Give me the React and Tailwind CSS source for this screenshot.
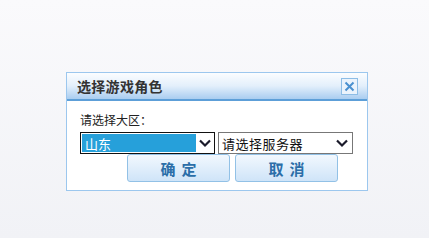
import React from "react";

const Chevron = () => (
  <svg width="14" height="10" viewBox="0 0 14 10" className="shrink-0">
    <path d="M2 2.5 L7 7.5 L12 2.5" fill="none" stroke="#1a1a2a" strokeWidth="2.2" />
  </svg>
);

export default function App() {
  const font = { fontFamily: '"Noto Sans CJK SC", "Noto Sans", sans-serif' };
  return (
    <div
      className="w-[429px] h-[238px] bg-gradient-to-b from-[#fafafc] to-[#f1f2f6] pt-[72px] pl-[66px]"
      style={font}
    >
      <div className="w-[302px] h-[119px] border border-[#9cc7ee] bg-white flex flex-col">
        <div className="h-[28px] bg-gradient-to-b from-[#fbfdff] via-[#e3effb] to-[#a9cdf0] border-b-2 border-[#5d9fd8] flex items-center justify-between pl-[10px] pr-[9px]">
          <span className="text-[14px] font-bold text-[#333] leading-none tracking-[0.3px]">选择游戏角色</span>
          <div className="w-[17px] h-[17px] border border-[#8dbde6] bg-[#eaf3fc] flex items-center justify-center">
            <svg width="11" height="11" viewBox="0 0 11 11">
              <path d="M1.5 1.5 L9.5 9.5 M9.5 1.5 L1.5 9.5" stroke="#4a90d0" strokeWidth="2" />
            </svg>
          </div>
        </div>
        <div className="pl-[13px] pt-[12px] flex flex-col">
          <div className="text-[12px] leading-[14px] text-[#222]">请选择大区：</div>
          <div className="flex gap-[3px] mt-[5px]">
            <div className="w-[135px] h-[22px] border border-[#111] flex items-center p-[1px] bg-white">
              <div className="w-[114px] h-full bg-[#26a0da] text-white text-[13px] leading-none flex items-center pl-[3px]">
                山东
              </div>
              <div className="flex-1 flex justify-center">
                <Chevron />
              </div>
            </div>
            <div className="w-[135px] h-[22px] border border-[#777] flex items-center pl-[3px] pr-[3px] justify-between bg-white">
              <span className="text-[13px] leading-none text-[#111] tracking-[0.5px]">请选择服务器</span>
              <Chevron />
            </div>
          </div>
          <div className="flex gap-[5px] pl-[47px]">
            <button className="w-[103px] h-[28px] rounded-[3px] border border-[#92c1e6] bg-gradient-to-b from-[#f2f8fe] to-[#cfe4f8] text-[15px] font-bold text-[#2b6ea8] tracking-[6px] pl-[6px] leading-none">
              确定
            </button>
            <button className="w-[103px] h-[28px] rounded-[3px] border border-[#92c1e6] bg-gradient-to-b from-[#f2f8fe] to-[#cfe4f8] text-[15px] font-bold text-[#2b6ea8] tracking-[6px] pl-[6px] leading-none">
              取消
            </button>
          </div>
        </div>
      </div>
    </div>
  );
}
